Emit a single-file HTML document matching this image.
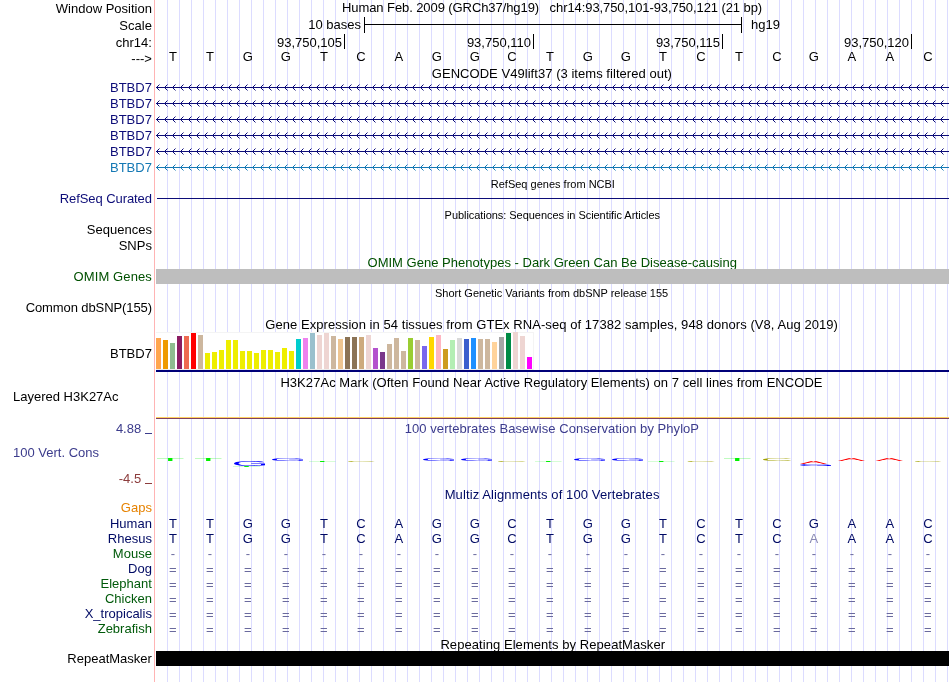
<!DOCTYPE html>
<html><head><meta charset="utf-8"><title>UCSC Genome Browser</title>
<style>
html,body{margin:0;padding:0;background:#fff;}
body{width:950px;height:682px;position:relative;overflow:hidden;font-family:"Liberation Sans",sans-serif;font-size:13px;color:#000;}
.t{position:absolute;white-space:pre;line-height:13px;height:13px;}
.l{text-align:right;left:0;width:151.9px;}
.c{text-align:center;left:156px;width:793px;}
.s{font-size:11px;line-height:11px;height:11px;}
.b{position:absolute;width:40px;text-align:center;line-height:13px;height:13px;}
.r{position:absolute;}
.nv{color:#000a64}.gr{color:#005a0a}
svg{position:absolute;left:0;top:0;}
#w{position:absolute;left:0;top:0;width:950px;height:682px;will-change:transform;}
</style></head><body><div id="w">

<div class="r" style="left:156px;top:0;width:794px;height:682px;background:repeating-linear-gradient(to right,transparent 0,transparent 11px,#dcdcff 11px,#dcdcff 12px);"></div>
<div class="r" style="left:154px;top:0;width:1px;height:682px;background:#ffb4b4;"></div>
<div class="t l " style="top:1.80px;">Window Position</div>
<div class="t l " style="top:18.50px;">Scale</div>
<div class="t l " style="top:35.65px;">chr14:</div>
<div class="t l " style="top:52.15px;">---&gt;</div>
<div class="t" style="left:342.0px;top:0.85px;font-size:13px;line-height:13px;height:13px;letter-spacing:-0.0833px;">Human Feb. 2009 (GRCh37/hg19)   chr14:93,750,101-93,750,121 (21 bp)</div>
<div class="t" style="left:308.3px;top:18.15px;">10 bases</div>
<div class="r" style="left:364px;top:17px;width:1px;height:16px;background:#000;"></div>
<div class="r" style="left:364px;top:24px;width:378px;height:1px;background:#000;"></div>
<div class="r" style="left:741px;top:17px;width:1px;height:16px;background:#000;"></div>
<div class="t" style="left:751px;top:18.15px;">hg19</div>
<div class="r" style="left:344px;top:34px;width:1px;height:15px;background:#000;"></div>
<div class="t" style="left:262px;width:80px;text-align:right;top:35.65px;">93,750,105</div>
<div class="r" style="left:533px;top:34px;width:1px;height:15px;background:#000;"></div>
<div class="t" style="left:451px;width:80px;text-align:right;top:35.65px;">93,750,110</div>
<div class="r" style="left:722px;top:34px;width:1px;height:15px;background:#000;"></div>
<div class="t" style="left:640px;width:80px;text-align:right;top:35.65px;">93,750,115</div>
<div class="r" style="left:911px;top:34px;width:1px;height:15px;background:#000;"></div>
<div class="t" style="left:829px;width:80px;text-align:right;top:35.65px;">93,750,120</div>
<div class="b" style="left:152.90px;top:49.65px;">T</div>
<div class="b" style="left:189.90px;top:49.65px;">T</div>
<div class="b" style="left:227.90px;top:49.65px;">G</div>
<div class="b" style="left:265.90px;top:49.65px;">G</div>
<div class="b" style="left:303.90px;top:49.65px;">T</div>
<div class="b" style="left:340.90px;top:49.65px;">C</div>
<div class="b" style="left:378.90px;top:49.65px;">A</div>
<div class="b" style="left:416.90px;top:49.65px;">G</div>
<div class="b" style="left:454.90px;top:49.65px;">G</div>
<div class="b" style="left:491.90px;top:49.65px;">C</div>
<div class="b" style="left:529.90px;top:49.65px;">T</div>
<div class="b" style="left:567.90px;top:49.65px;">G</div>
<div class="b" style="left:605.90px;top:49.65px;">G</div>
<div class="b" style="left:642.90px;top:49.65px;">T</div>
<div class="b" style="left:680.90px;top:49.65px;">C</div>
<div class="b" style="left:718.90px;top:49.65px;">T</div>
<div class="b" style="left:756.90px;top:49.65px;">C</div>
<div class="b" style="left:793.90px;top:49.65px;">G</div>
<div class="b" style="left:831.90px;top:49.65px;">A</div>
<div class="b" style="left:869.90px;top:49.65px;">A</div>
<div class="b" style="left:907.90px;top:49.65px;">C</div>
<div class="t" style="left:431.8px;top:66.65px;font-size:13px;line-height:13px;height:13px;letter-spacing:0.0436px;">GENCODE V49lift37 (3 items filtered out)</div>
<div class="t l " style="top:80.95px;color:#0c0c78;">BTBD7</div>
<div class="t l " style="top:96.95px;color:#0c0c78;">BTBD7</div>
<div class="t l " style="top:112.95px;color:#0c0c78;">BTBD7</div>
<div class="t l " style="top:128.95px;color:#0c0c78;">BTBD7</div>
<div class="t l " style="top:144.95px;color:#0c0c78;">BTBD7</div>
<div class="t l " style="top:160.95px;color:#1478b4;">BTBD7</div>
<svg width="950" height="682" viewBox="0 0 950 682">
<defs><pattern id="cha" x="156" y="0" width="8" height="7" patternUnits="userSpaceOnUse"><path d="M3.5,0.5 L0.5,3.5 L3.5,6.5" fill="none" stroke="#0c0c78" stroke-width="1"/></pattern><pattern id="chb" x="156" y="0" width="8" height="7" patternUnits="userSpaceOnUse"><path d="M3.5,0.5 L0.5,3.5 L3.5,6.5" fill="none" stroke="#1478b4" stroke-width="1"/></pattern></defs>
<g style="color:#0c0c78" transform="translate(0,84)"><rect x="156" y="0" width="793" height="7" fill="url(#cha)"/><rect x="156" y="3" width="793" height="1" fill="#0c0c78"/></g>
<g style="color:#0c0c78" transform="translate(0,100)"><rect x="156" y="0" width="793" height="7" fill="url(#cha)"/><rect x="156" y="3" width="793" height="1" fill="#0c0c78"/></g>
<g style="color:#0c0c78" transform="translate(0,116)"><rect x="156" y="0" width="793" height="7" fill="url(#cha)"/><rect x="156" y="3" width="793" height="1" fill="#0c0c78"/></g>
<g style="color:#0c0c78" transform="translate(0,132)"><rect x="156" y="0" width="793" height="7" fill="url(#cha)"/><rect x="156" y="3" width="793" height="1" fill="#0c0c78"/></g>
<g style="color:#0c0c78" transform="translate(0,148)"><rect x="156" y="0" width="793" height="7" fill="url(#cha)"/><rect x="156" y="3" width="793" height="1" fill="#0c0c78"/></g>
<g style="color:#1478b4" transform="translate(0,164)"><rect x="156" y="0" width="793" height="7" fill="url(#chb)"/><rect x="156" y="3" width="793" height="1" fill="#1478b4"/></g>
</svg>
<div class="t" style="left:490.8px;top:178.73px;font-size:11px;line-height:11px;height:11px;letter-spacing:-0.0px;">RefSeq genes from NCBI</div>
<div class="t l " style="top:191.65px;color:#0c0c78;letter-spacing:-0.08px;">RefSeq Curated</div>
<div class="r" style="left:157px;top:198px;width:792px;height:1px;background:#0c0c78;"></div>
<div class="t" style="left:444.6px;top:210.23px;font-size:11px;line-height:11px;height:11px;letter-spacing:-0.0489px;">Publications: Sequences in Scientific Articles</div>
<div class="t l " style="top:222.95px;">Sequences</div>
<div class="t l " style="top:239.25px;">SNPs</div>
<div class="t" style="left:367.5px;top:255.85px;font-size:13px;line-height:13px;height:13px;letter-spacing:0.0182px;color:#005000;">OMIM Gene Phenotypes - Dark Green Can Be Disease-causing</div>
<div class="t l " style="top:269.95px;color:#005000;letter-spacing:0.1px;">OMIM Genes</div>
<div class="r" style="left:156px;top:269px;width:793px;height:15px;background:#bebebe;"></div>
<div class="t" style="left:435.0px;top:287.53px;font-size:11px;line-height:11px;height:11px;letter-spacing:0.0px;">Short Genetic Variants from dbSNP release 155</div>
<div class="t l " style="top:300.65px;letter-spacing:-0.1px;">Common dbSNP(155)</div>
<div class="t" style="left:265.3px;top:317.85px;font-size:13px;line-height:13px;height:13px;letter-spacing:0.06px;">Gene Expression in 54 tissues from GTEx RNA-seq of 17382 samples, 948 donors (V8, Aug 2019)</div>
<div class="t l " style="top:347.05px;">BTBD7</div>
<div class="r" style="left:156px;top:332px;width:378px;height:38px;background:#fff;box-shadow:inset -1px 1px 0 #f4f4f4,inset 0 -1px 0 #ededed;"></div>
<div class="r" style="left:156px;top:338px;width:5px;height:31px;background:#FFA54F;"></div>
<div class="r" style="left:163px;top:340px;width:5px;height:29px;background:#EE9A00;"></div>
<div class="r" style="left:170px;top:343px;width:5px;height:26px;background:#8FBC8F;"></div>
<div class="r" style="left:177px;top:336px;width:5px;height:33px;background:#8B1C62;"></div>
<div class="r" style="left:184px;top:336px;width:5px;height:33px;background:#EE6A50;"></div>
<div class="r" style="left:191px;top:333px;width:5px;height:36px;background:#FF0000;"></div>
<div class="r" style="left:198px;top:335px;width:5px;height:34px;background:#CDB79E;"></div>
<div class="r" style="left:205px;top:353px;width:5px;height:16px;background:#EEEE00;"></div>
<div class="r" style="left:212px;top:352px;width:5px;height:17px;background:#EEEE00;"></div>
<div class="r" style="left:219px;top:350px;width:5px;height:19px;background:#EEEE00;"></div>
<div class="r" style="left:226px;top:340px;width:5px;height:29px;background:#EEEE00;"></div>
<div class="r" style="left:233px;top:340px;width:5px;height:29px;background:#EEEE00;"></div>
<div class="r" style="left:240px;top:351px;width:5px;height:18px;background:#EEEE00;"></div>
<div class="r" style="left:247px;top:351px;width:5px;height:18px;background:#EEEE00;"></div>
<div class="r" style="left:254px;top:353px;width:5px;height:16px;background:#EEEE00;"></div>
<div class="r" style="left:261px;top:350px;width:5px;height:19px;background:#EEEE00;"></div>
<div class="r" style="left:268px;top:350px;width:5px;height:19px;background:#EEEE00;"></div>
<div class="r" style="left:275px;top:352px;width:5px;height:17px;background:#EEEE00;"></div>
<div class="r" style="left:282px;top:348px;width:5px;height:21px;background:#EEEE00;"></div>
<div class="r" style="left:289px;top:351px;width:5px;height:18px;background:#EEEE00;"></div>
<div class="r" style="left:296px;top:339px;width:5px;height:30px;background:#00CDCD;"></div>
<div class="r" style="left:303px;top:338px;width:5px;height:31px;background:#EE82EE;"></div>
<div class="r" style="left:310px;top:333px;width:5px;height:36px;background:#9AC0CD;"></div>
<div class="r" style="left:317px;top:335px;width:5px;height:34px;background:#EED5D2;"></div>
<div class="r" style="left:324px;top:333px;width:5px;height:36px;background:#EED5D2;"></div>
<div class="r" style="left:331px;top:336px;width:5px;height:33px;background:#CDB79E;"></div>
<div class="r" style="left:338px;top:339px;width:5px;height:30px;background:#EEC591;"></div>
<div class="r" style="left:345px;top:337px;width:5px;height:32px;background:#8B7355;"></div>
<div class="r" style="left:352px;top:337px;width:5px;height:32px;background:#8B7355;"></div>
<div class="r" style="left:359px;top:337px;width:5px;height:32px;background:#CDAA7D;"></div>
<div class="r" style="left:366px;top:335px;width:5px;height:34px;background:#EED5D2;"></div>
<div class="r" style="left:373px;top:348px;width:5px;height:21px;background:#B452CD;"></div>
<div class="r" style="left:380px;top:352px;width:5px;height:17px;background:#7A378B;"></div>
<div class="r" style="left:387px;top:344px;width:5px;height:25px;background:#CDB79E;"></div>
<div class="r" style="left:394px;top:338px;width:5px;height:31px;background:#CDB79E;"></div>
<div class="r" style="left:401px;top:351px;width:5px;height:18px;background:#CDB79E;"></div>
<div class="r" style="left:408px;top:338px;width:5px;height:31px;background:#9ACD32;"></div>
<div class="r" style="left:415px;top:340px;width:5px;height:29px;background:#CDB79E;"></div>
<div class="r" style="left:422px;top:346px;width:5px;height:23px;background:#7A67EE;"></div>
<div class="r" style="left:429px;top:337px;width:5px;height:32px;background:#FFD700;"></div>
<div class="r" style="left:436px;top:335px;width:5px;height:34px;background:#FFB6C1;"></div>
<div class="r" style="left:443px;top:349px;width:5px;height:20px;background:#CD9B1D;"></div>
<div class="r" style="left:450px;top:340px;width:5px;height:29px;background:#B4EEB4;"></div>
<div class="r" style="left:457px;top:338px;width:5px;height:31px;background:#D9D9D9;"></div>
<div class="r" style="left:464px;top:339px;width:5px;height:30px;background:#3A5FCD;"></div>
<div class="r" style="left:471px;top:338px;width:5px;height:31px;background:#1E90FF;"></div>
<div class="r" style="left:478px;top:339px;width:5px;height:30px;background:#CDB79E;"></div>
<div class="r" style="left:485px;top:339px;width:5px;height:30px;background:#CDB79E;"></div>
<div class="r" style="left:492px;top:342px;width:5px;height:27px;background:#FFD39B;"></div>
<div class="r" style="left:499px;top:337px;width:5px;height:32px;background:#A6A6A6;"></div>
<div class="r" style="left:506px;top:333px;width:5px;height:36px;background:#008B45;"></div>
<div class="r" style="left:513px;top:332px;width:5px;height:37px;background:#EED5D2;"></div>
<div class="r" style="left:520px;top:336px;width:5px;height:33px;background:#EED5D2;"></div>
<div class="r" style="left:527px;top:357px;width:5px;height:12px;background:#FF00FF;"></div>
<div class="r" style="left:156px;top:370px;width:793px;height:2px;background:#000078;"></div>
<div class="t" style="left:280.4px;top:376.05px;font-size:13px;line-height:13px;height:13px;letter-spacing:0.0541px;">H3K27Ac Mark (Often Found Near Active Regulatory Elements) on 7 cell lines from ENCODE</div>
<div class="t" style="left:13px;top:390.15px;">Layered H3K27Ac</div>
<div class="r" style="left:156px;top:417px;width:793px;height:1px;background:#ffd060;"></div>
<div class="r" style="left:156px;top:418px;width:793px;height:1px;background:#804060;"></div>
<div class="t" style="left:404.8px;top:421.65px;font-size:13px;line-height:13px;height:13px;letter-spacing:0.05px;color:#3c3c8c;">100 vertebrates Basewise Conservation by PhyloP</div>
<div class="t l " style="top:421.65px;color:#3c3c8c;width:141.2px;">4.88</div>
<div class="r" style="left:145px;top:433px;width:7px;height:1px;background:#3c3c8c;"></div>
<div class="t" style="left:13px;top:445.95px;color:#3c3c8c;">100 Vert. Cons</div>
<div class="t l " style="top:471.65px;color:#8c3c3c;width:141.2px;">-4.5</div>
<div class="r" style="left:145px;top:483px;width:7px;height:1px;background:#8c3c3c;"></div>
<svg width="950" height="682" viewBox="0 0 950 682">
<path d="M720 1253V0H530V1253H46V1409H1204V1253Z" fill="#00f000" transform="matrix(0.02288,0,0,-0.002129,155.947,461.000)"/>
<path d="M720 1253V0H530V1253H46V1409H1204V1253Z" fill="#00f000" transform="matrix(0.02288,0,0,-0.002129,193.947,461.000)"/>
<path d="M103 711Q103 1054 287.0 1242.0Q471 1430 804 1430Q1038 1430 1184.0 1351.0Q1330 1272 1409 1098L1227 1044Q1167 1164 1061.5 1219.0Q956 1274 799 1274Q555 1274 426.0 1126.5Q297 979 297 711Q297 444 434.0 289.5Q571 135 813 135Q951 135 1070.5 177.0Q1190 219 1264 291V545H843V705H1440V219Q1328 105 1165.5 42.5Q1003 -20 813 -20Q592 -20 432.0 68.0Q272 156 187.5 321.5Q103 487 103 711Z" fill="#0000ff" transform="matrix(0.02319,0,0,-0.003448,231.612,465.931)"/>
<path d="M720 1253V0H530V1253H46V1409H1204V1253Z" fill="#00f000" transform="matrix(0.02332,0,0,-0.000639,231.927,466.900)"/>
<path d="M103 711Q103 1054 287.0 1242.0Q471 1430 804 1430Q1038 1430 1184.0 1351.0Q1330 1272 1409 1098L1227 1044Q1167 1164 1061.5 1219.0Q956 1274 799 1274Q555 1274 426.0 1126.5Q297 979 297 711Q297 444 434.0 289.5Q571 135 813 135Q951 135 1070.5 177.0Q1190 219 1264 291V545H843V705H1440V219Q1328 105 1165.5 42.5Q1003 -20 813 -20Q592 -20 432.0 68.0Q272 156 187.5 321.5Q103 487 103 711Z" fill="#0000ff" transform="matrix(0.02319,0,0,-0.002069,269.612,460.959)"/>
<path d="M720 1253V0H530V1253H46V1409H1204V1253Z" fill="#00f000" transform="matrix(0.02288,0,0,-0.000639,307.947,461.900)"/>
<path d="M792 1274Q558 1274 428.0 1123.5Q298 973 298 711Q298 452 433.5 294.5Q569 137 800 137Q1096 137 1245 430L1401 352Q1314 170 1156.5 75.0Q999 -20 791 -20Q578 -20 422.5 68.5Q267 157 185.5 321.5Q104 486 104 711Q104 1048 286.0 1239.0Q468 1430 790 1430Q1015 1430 1166.0 1342.0Q1317 1254 1388 1081L1207 1021Q1158 1144 1049.5 1209.0Q941 1274 792 1274Z" fill="#a0a000" transform="matrix(0.02082,0,0,-0.000621,345.835,461.888)"/>
<path d="M103 711Q103 1054 287.0 1242.0Q471 1430 804 1430Q1038 1430 1184.0 1351.0Q1330 1272 1409 1098L1227 1044Q1167 1164 1061.5 1219.0Q956 1274 799 1274Q555 1274 426.0 1126.5Q297 979 297 711Q297 444 434.0 289.5Q571 135 813 135Q951 135 1070.5 177.0Q1190 219 1264 291V545H843V705H1440V219Q1328 105 1165.5 42.5Q1003 -20 813 -20Q592 -20 432.0 68.0Q272 156 187.5 321.5Q103 487 103 711Z" fill="#0000ff" transform="matrix(0.02319,0,0,-0.002069,420.612,460.959)"/>
<path d="M103 711Q103 1054 287.0 1242.0Q471 1430 804 1430Q1038 1430 1184.0 1351.0Q1330 1272 1409 1098L1227 1044Q1167 1164 1061.5 1219.0Q956 1274 799 1274Q555 1274 426.0 1126.5Q297 979 297 711Q297 444 434.0 289.5Q571 135 813 135Q951 135 1070.5 177.0Q1190 219 1264 291V545H843V705H1440V219Q1328 105 1165.5 42.5Q1003 -20 813 -20Q592 -20 432.0 68.0Q272 156 187.5 321.5Q103 487 103 711Z" fill="#0000ff" transform="matrix(0.02319,0,0,-0.002069,458.612,460.959)"/>
<path d="M792 1274Q558 1274 428.0 1123.5Q298 973 298 711Q298 452 433.5 294.5Q569 137 800 137Q1096 137 1245 430L1401 352Q1314 170 1156.5 75.0Q999 -20 791 -20Q578 -20 422.5 68.5Q267 157 185.5 321.5Q104 486 104 711Q104 1048 286.0 1239.0Q468 1430 790 1430Q1015 1430 1166.0 1342.0Q1317 1254 1388 1081L1207 1021Q1158 1144 1049.5 1209.0Q941 1274 792 1274Z" fill="#a0a000" transform="matrix(0.02159,0,0,-0.000621,495.755,461.888)"/>
<path d="M720 1253V0H530V1253H46V1409H1204V1253Z" fill="#00f000" transform="matrix(0.02288,0,0,-0.000639,533.947,461.900)"/>
<path d="M103 711Q103 1054 287.0 1242.0Q471 1430 804 1430Q1038 1430 1184.0 1351.0Q1330 1272 1409 1098L1227 1044Q1167 1164 1061.5 1219.0Q956 1274 799 1274Q555 1274 426.0 1126.5Q297 979 297 711Q297 444 434.0 289.5Q571 135 813 135Q951 135 1070.5 177.0Q1190 219 1264 291V545H843V705H1440V219Q1328 105 1165.5 42.5Q1003 -20 813 -20Q592 -20 432.0 68.0Q272 156 187.5 321.5Q103 487 103 711Z" fill="#0000ff" transform="matrix(0.02319,0,0,-0.002069,571.612,460.959)"/>
<path d="M103 711Q103 1054 287.0 1242.0Q471 1430 804 1430Q1038 1430 1184.0 1351.0Q1330 1272 1409 1098L1227 1044Q1167 1164 1061.5 1219.0Q956 1274 799 1274Q555 1274 426.0 1126.5Q297 979 297 711Q297 444 434.0 289.5Q571 135 813 135Q951 135 1070.5 177.0Q1190 219 1264 291V545H843V705H1440V219Q1328 105 1165.5 42.5Q1003 -20 813 -20Q592 -20 432.0 68.0Q272 156 187.5 321.5Q103 487 103 711Z" fill="#0000ff" transform="matrix(0.02319,0,0,-0.002069,609.612,460.959)"/>
<path d="M720 1253V0H530V1253H46V1409H1204V1253Z" fill="#00f000" transform="matrix(0.02288,0,0,-0.000639,646.947,461.900)"/>
<path d="M792 1274Q558 1274 428.0 1123.5Q298 973 298 711Q298 452 433.5 294.5Q569 137 800 137Q1096 137 1245 430L1401 352Q1314 170 1156.5 75.0Q999 -20 791 -20Q578 -20 422.5 68.5Q267 157 185.5 321.5Q104 486 104 711Q104 1048 286.0 1239.0Q468 1430 790 1430Q1015 1430 1166.0 1342.0Q1317 1254 1388 1081L1207 1021Q1158 1144 1049.5 1209.0Q941 1274 792 1274Z" fill="#a0a000" transform="matrix(0.02120,0,0,-0.000621,685.295,461.888)"/>
<path d="M720 1253V0H530V1253H46V1409H1204V1253Z" fill="#00f000" transform="matrix(0.02288,0,0,-0.002129,722.947,461.000)"/>
<path d="M792 1274Q558 1274 428.0 1123.5Q298 973 298 711Q298 452 433.5 294.5Q569 137 800 137Q1096 137 1245 430L1401 352Q1314 170 1156.5 75.0Q999 -20 791 -20Q578 -20 422.5 68.5Q267 157 185.5 321.5Q104 486 104 711Q104 1048 286.0 1239.0Q468 1430 790 1430Q1015 1430 1166.0 1342.0Q1317 1254 1388 1081L1207 1021Q1158 1144 1049.5 1209.0Q941 1274 792 1274Z" fill="#a0a000" transform="matrix(0.02197,0,0,-0.002069,760.715,460.959)"/>
<path d="M1167 0 1006 412H364L202 0H4L579 1409H796L1362 0ZM685 1265 676 1237Q651 1154 602 1024L422 561H949L768 1026Q740 1095 712 1182Z" fill="#ff0000" transform="matrix(0.01988,0,0,-0.002129,799.920,464.000)"/>
<path d="M103 711Q103 1054 287.0 1242.0Q471 1430 804 1430Q1038 1430 1184.0 1351.0Q1330 1272 1409 1098L1227 1044Q1167 1164 1061.5 1219.0Q956 1274 799 1274Q555 1274 426.0 1126.5Q297 979 297 711Q297 444 434.0 289.5Q571 135 813 135Q951 135 1070.5 177.0Q1190 219 1264 291V545H843V705H1440V219Q1328 105 1165.5 42.5Q1003 -20 813 -20Q592 -20 432.0 68.0Q272 156 187.5 321.5Q103 487 103 711Z" fill="#0000ff" transform="matrix(0.02319,0,0,-0.001379,797.612,465.972)"/>
<path d="M1167 0 1006 412H364L202 0H4L579 1409H796L1362 0ZM685 1265 676 1237Q651 1154 602 1024L422 561H949L768 1026Q740 1095 712 1182Z" fill="#ff0000" transform="matrix(0.01988,0,0,-0.002129,837.920,461.000)"/>
<path d="M1167 0 1006 412H364L202 0H4L579 1409H796L1362 0ZM685 1265 676 1237Q651 1154 602 1024L422 561H949L768 1026Q740 1095 712 1182Z" fill="#ff0000" transform="matrix(0.02025,0,0,-0.002129,875.419,461.000)"/>
<path d="M792 1274Q558 1274 428.0 1123.5Q298 973 298 711Q298 452 433.5 294.5Q569 137 800 137Q1096 137 1245 430L1401 352Q1314 170 1156.5 75.0Q999 -20 791 -20Q578 -20 422.5 68.5Q267 157 185.5 321.5Q104 486 104 711Q104 1048 286.0 1239.0Q468 1430 790 1430Q1015 1430 1166.0 1342.0Q1317 1254 1388 1081L1207 1021Q1158 1144 1049.5 1209.0Q941 1274 792 1274Z" fill="#a0a000" transform="matrix(0.02043,0,0,-0.000621,912.875,461.888)"/>
<rect x="309" y="461" width="26.5" height="1" fill="#00f000" fill-opacity="0.16"/>
<rect x="535" y="461" width="26.5" height="1" fill="#00f000" fill-opacity="0.16"/>
<rect x="648" y="461" width="26.5" height="1" fill="#00f000" fill-opacity="0.16"/>
<rect x="233" y="466" width="27" height="1" fill="#00f000" fill-opacity="0.16"/>
</svg>
<div class="t" style="left:444.7px;top:487.85px;font-size:13px;line-height:13px;height:13px;letter-spacing:0.1057px;color:#000a64;">Multiz Alignments of 100 Vertebrates</div>
<div class="t l " style="top:501.35px;color:#e68200;">Gaps</div>
<div class="t l nv" style="top:516.55px;">Human</div>
<div class="b" style="left:152.90px;top:516.55px;color:#000a64;">T</div>
<div class="b" style="left:189.90px;top:516.55px;color:#000a64;">T</div>
<div class="b" style="left:227.90px;top:516.55px;color:#000a64;">G</div>
<div class="b" style="left:265.90px;top:516.55px;color:#000a64;">G</div>
<div class="b" style="left:303.90px;top:516.55px;color:#000a64;">T</div>
<div class="b" style="left:340.90px;top:516.55px;color:#000a64;">C</div>
<div class="b" style="left:378.90px;top:516.55px;color:#000a64;">A</div>
<div class="b" style="left:416.90px;top:516.55px;color:#000a64;">G</div>
<div class="b" style="left:454.90px;top:516.55px;color:#000a64;">G</div>
<div class="b" style="left:491.90px;top:516.55px;color:#000a64;">C</div>
<div class="b" style="left:529.90px;top:516.55px;color:#000a64;">T</div>
<div class="b" style="left:567.90px;top:516.55px;color:#000a64;">G</div>
<div class="b" style="left:605.90px;top:516.55px;color:#000a64;">G</div>
<div class="b" style="left:642.90px;top:516.55px;color:#000a64;">T</div>
<div class="b" style="left:680.90px;top:516.55px;color:#000a64;">C</div>
<div class="b" style="left:718.90px;top:516.55px;color:#000a64;">T</div>
<div class="b" style="left:756.90px;top:516.55px;color:#000a64;">C</div>
<div class="b" style="left:793.90px;top:516.55px;color:#000a64;">G</div>
<div class="b" style="left:831.90px;top:516.55px;color:#000a64;">A</div>
<div class="b" style="left:869.90px;top:516.55px;color:#000a64;">A</div>
<div class="b" style="left:907.90px;top:516.55px;color:#000a64;">C</div>
<div class="t l nv" style="top:531.62px;">Rhesus</div>
<div class="b" style="left:152.90px;top:531.62px;color:#000a64;">T</div>
<div class="b" style="left:189.90px;top:531.62px;color:#000a64;">T</div>
<div class="b" style="left:227.90px;top:531.62px;color:#000a64;">G</div>
<div class="b" style="left:265.90px;top:531.62px;color:#000a64;">G</div>
<div class="b" style="left:303.90px;top:531.62px;color:#000a64;">T</div>
<div class="b" style="left:340.90px;top:531.62px;color:#000a64;">C</div>
<div class="b" style="left:378.90px;top:531.62px;color:#000a64;">A</div>
<div class="b" style="left:416.90px;top:531.62px;color:#000a64;">G</div>
<div class="b" style="left:454.90px;top:531.62px;color:#000a64;">G</div>
<div class="b" style="left:491.90px;top:531.62px;color:#000a64;">C</div>
<div class="b" style="left:529.90px;top:531.62px;color:#000a64;">T</div>
<div class="b" style="left:567.90px;top:531.62px;color:#000a64;">G</div>
<div class="b" style="left:605.90px;top:531.62px;color:#000a64;">G</div>
<div class="b" style="left:642.90px;top:531.62px;color:#000a64;">T</div>
<div class="b" style="left:680.90px;top:531.62px;color:#000a64;">C</div>
<div class="b" style="left:718.90px;top:531.62px;color:#000a64;">T</div>
<div class="b" style="left:756.90px;top:531.62px;color:#000a64;">C</div>
<div class="b" style="left:793.90px;top:531.62px;color:#8a8ab4;">A</div>
<div class="b" style="left:831.90px;top:531.62px;color:#000a64;">A</div>
<div class="b" style="left:869.90px;top:531.62px;color:#000a64;">A</div>
<div class="b" style="left:907.90px;top:531.62px;color:#000a64;">C</div>
<div class="t l gr" style="top:546.69px;">Mouse</div>
<div class="b" style="left:152.90px;top:546.69px;color:#6a6a9e;">-</div>
<div class="b" style="left:189.90px;top:546.69px;color:#6a6a9e;">-</div>
<div class="b" style="left:227.90px;top:546.69px;color:#6a6a9e;">-</div>
<div class="b" style="left:265.90px;top:546.69px;color:#6a6a9e;">-</div>
<div class="b" style="left:303.90px;top:546.69px;color:#6a6a9e;">-</div>
<div class="b" style="left:340.90px;top:546.69px;color:#6a6a9e;">-</div>
<div class="b" style="left:378.90px;top:546.69px;color:#6a6a9e;">-</div>
<div class="b" style="left:416.90px;top:546.69px;color:#6a6a9e;">-</div>
<div class="b" style="left:454.90px;top:546.69px;color:#6a6a9e;">-</div>
<div class="b" style="left:491.90px;top:546.69px;color:#6a6a9e;">-</div>
<div class="b" style="left:529.90px;top:546.69px;color:#6a6a9e;">-</div>
<div class="b" style="left:567.90px;top:546.69px;color:#6a6a9e;">-</div>
<div class="b" style="left:605.90px;top:546.69px;color:#6a6a9e;">-</div>
<div class="b" style="left:642.90px;top:546.69px;color:#6a6a9e;">-</div>
<div class="b" style="left:680.90px;top:546.69px;color:#6a6a9e;">-</div>
<div class="b" style="left:718.90px;top:546.69px;color:#6a6a9e;">-</div>
<div class="b" style="left:756.90px;top:546.69px;color:#6a6a9e;">-</div>
<div class="b" style="left:793.90px;top:546.69px;color:#6a6a9e;">-</div>
<div class="b" style="left:831.90px;top:546.69px;color:#6a6a9e;">-</div>
<div class="b" style="left:869.90px;top:546.69px;color:#6a6a9e;">-</div>
<div class="b" style="left:907.90px;top:546.69px;color:#6a6a9e;">-</div>
<div class="t l nv" style="top:561.76px;">Dog</div>
<div class="b" style="left:152.90px;top:562.76px;color:#6a6a9e;">=</div>
<div class="b" style="left:189.90px;top:562.76px;color:#6a6a9e;">=</div>
<div class="b" style="left:227.90px;top:562.76px;color:#6a6a9e;">=</div>
<div class="b" style="left:265.90px;top:562.76px;color:#6a6a9e;">=</div>
<div class="b" style="left:303.90px;top:562.76px;color:#6a6a9e;">=</div>
<div class="b" style="left:340.90px;top:562.76px;color:#6a6a9e;">=</div>
<div class="b" style="left:378.90px;top:562.76px;color:#6a6a9e;">=</div>
<div class="b" style="left:416.90px;top:562.76px;color:#6a6a9e;">=</div>
<div class="b" style="left:454.90px;top:562.76px;color:#6a6a9e;">=</div>
<div class="b" style="left:491.90px;top:562.76px;color:#6a6a9e;">=</div>
<div class="b" style="left:529.90px;top:562.76px;color:#6a6a9e;">=</div>
<div class="b" style="left:567.90px;top:562.76px;color:#6a6a9e;">=</div>
<div class="b" style="left:605.90px;top:562.76px;color:#6a6a9e;">=</div>
<div class="b" style="left:642.90px;top:562.76px;color:#6a6a9e;">=</div>
<div class="b" style="left:680.90px;top:562.76px;color:#6a6a9e;">=</div>
<div class="b" style="left:718.90px;top:562.76px;color:#6a6a9e;">=</div>
<div class="b" style="left:756.90px;top:562.76px;color:#6a6a9e;">=</div>
<div class="b" style="left:793.90px;top:562.76px;color:#6a6a9e;">=</div>
<div class="b" style="left:831.90px;top:562.76px;color:#6a6a9e;">=</div>
<div class="b" style="left:869.90px;top:562.76px;color:#6a6a9e;">=</div>
<div class="b" style="left:907.90px;top:562.76px;color:#6a6a9e;">=</div>
<div class="t l gr" style="top:576.83px;">Elephant</div>
<div class="b" style="left:152.90px;top:577.83px;color:#6a6a9e;">=</div>
<div class="b" style="left:189.90px;top:577.83px;color:#6a6a9e;">=</div>
<div class="b" style="left:227.90px;top:577.83px;color:#6a6a9e;">=</div>
<div class="b" style="left:265.90px;top:577.83px;color:#6a6a9e;">=</div>
<div class="b" style="left:303.90px;top:577.83px;color:#6a6a9e;">=</div>
<div class="b" style="left:340.90px;top:577.83px;color:#6a6a9e;">=</div>
<div class="b" style="left:378.90px;top:577.83px;color:#6a6a9e;">=</div>
<div class="b" style="left:416.90px;top:577.83px;color:#6a6a9e;">=</div>
<div class="b" style="left:454.90px;top:577.83px;color:#6a6a9e;">=</div>
<div class="b" style="left:491.90px;top:577.83px;color:#6a6a9e;">=</div>
<div class="b" style="left:529.90px;top:577.83px;color:#6a6a9e;">=</div>
<div class="b" style="left:567.90px;top:577.83px;color:#6a6a9e;">=</div>
<div class="b" style="left:605.90px;top:577.83px;color:#6a6a9e;">=</div>
<div class="b" style="left:642.90px;top:577.83px;color:#6a6a9e;">=</div>
<div class="b" style="left:680.90px;top:577.83px;color:#6a6a9e;">=</div>
<div class="b" style="left:718.90px;top:577.83px;color:#6a6a9e;">=</div>
<div class="b" style="left:756.90px;top:577.83px;color:#6a6a9e;">=</div>
<div class="b" style="left:793.90px;top:577.83px;color:#6a6a9e;">=</div>
<div class="b" style="left:831.90px;top:577.83px;color:#6a6a9e;">=</div>
<div class="b" style="left:869.90px;top:577.83px;color:#6a6a9e;">=</div>
<div class="b" style="left:907.90px;top:577.83px;color:#6a6a9e;">=</div>
<div class="t l gr" style="top:591.90px;">Chicken</div>
<div class="b" style="left:152.90px;top:592.90px;color:#6a6a9e;">=</div>
<div class="b" style="left:189.90px;top:592.90px;color:#6a6a9e;">=</div>
<div class="b" style="left:227.90px;top:592.90px;color:#6a6a9e;">=</div>
<div class="b" style="left:265.90px;top:592.90px;color:#6a6a9e;">=</div>
<div class="b" style="left:303.90px;top:592.90px;color:#6a6a9e;">=</div>
<div class="b" style="left:340.90px;top:592.90px;color:#6a6a9e;">=</div>
<div class="b" style="left:378.90px;top:592.90px;color:#6a6a9e;">=</div>
<div class="b" style="left:416.90px;top:592.90px;color:#6a6a9e;">=</div>
<div class="b" style="left:454.90px;top:592.90px;color:#6a6a9e;">=</div>
<div class="b" style="left:491.90px;top:592.90px;color:#6a6a9e;">=</div>
<div class="b" style="left:529.90px;top:592.90px;color:#6a6a9e;">=</div>
<div class="b" style="left:567.90px;top:592.90px;color:#6a6a9e;">=</div>
<div class="b" style="left:605.90px;top:592.90px;color:#6a6a9e;">=</div>
<div class="b" style="left:642.90px;top:592.90px;color:#6a6a9e;">=</div>
<div class="b" style="left:680.90px;top:592.90px;color:#6a6a9e;">=</div>
<div class="b" style="left:718.90px;top:592.90px;color:#6a6a9e;">=</div>
<div class="b" style="left:756.90px;top:592.90px;color:#6a6a9e;">=</div>
<div class="b" style="left:793.90px;top:592.90px;color:#6a6a9e;">=</div>
<div class="b" style="left:831.90px;top:592.90px;color:#6a6a9e;">=</div>
<div class="b" style="left:869.90px;top:592.90px;color:#6a6a9e;">=</div>
<div class="b" style="left:907.90px;top:592.90px;color:#6a6a9e;">=</div>
<div class="t l nv" style="top:606.97px;">X_tropicalis</div>
<div class="b" style="left:152.90px;top:607.97px;color:#6a6a9e;">=</div>
<div class="b" style="left:189.90px;top:607.97px;color:#6a6a9e;">=</div>
<div class="b" style="left:227.90px;top:607.97px;color:#6a6a9e;">=</div>
<div class="b" style="left:265.90px;top:607.97px;color:#6a6a9e;">=</div>
<div class="b" style="left:303.90px;top:607.97px;color:#6a6a9e;">=</div>
<div class="b" style="left:340.90px;top:607.97px;color:#6a6a9e;">=</div>
<div class="b" style="left:378.90px;top:607.97px;color:#6a6a9e;">=</div>
<div class="b" style="left:416.90px;top:607.97px;color:#6a6a9e;">=</div>
<div class="b" style="left:454.90px;top:607.97px;color:#6a6a9e;">=</div>
<div class="b" style="left:491.90px;top:607.97px;color:#6a6a9e;">=</div>
<div class="b" style="left:529.90px;top:607.97px;color:#6a6a9e;">=</div>
<div class="b" style="left:567.90px;top:607.97px;color:#6a6a9e;">=</div>
<div class="b" style="left:605.90px;top:607.97px;color:#6a6a9e;">=</div>
<div class="b" style="left:642.90px;top:607.97px;color:#6a6a9e;">=</div>
<div class="b" style="left:680.90px;top:607.97px;color:#6a6a9e;">=</div>
<div class="b" style="left:718.90px;top:607.97px;color:#6a6a9e;">=</div>
<div class="b" style="left:756.90px;top:607.97px;color:#6a6a9e;">=</div>
<div class="b" style="left:793.90px;top:607.97px;color:#6a6a9e;">=</div>
<div class="b" style="left:831.90px;top:607.97px;color:#6a6a9e;">=</div>
<div class="b" style="left:869.90px;top:607.97px;color:#6a6a9e;">=</div>
<div class="b" style="left:907.90px;top:607.97px;color:#6a6a9e;">=</div>
<div class="t l gr" style="top:622.04px;">Zebrafish</div>
<div class="b" style="left:152.90px;top:623.04px;color:#6a6a9e;">=</div>
<div class="b" style="left:189.90px;top:623.04px;color:#6a6a9e;">=</div>
<div class="b" style="left:227.90px;top:623.04px;color:#6a6a9e;">=</div>
<div class="b" style="left:265.90px;top:623.04px;color:#6a6a9e;">=</div>
<div class="b" style="left:303.90px;top:623.04px;color:#6a6a9e;">=</div>
<div class="b" style="left:340.90px;top:623.04px;color:#6a6a9e;">=</div>
<div class="b" style="left:378.90px;top:623.04px;color:#6a6a9e;">=</div>
<div class="b" style="left:416.90px;top:623.04px;color:#6a6a9e;">=</div>
<div class="b" style="left:454.90px;top:623.04px;color:#6a6a9e;">=</div>
<div class="b" style="left:491.90px;top:623.04px;color:#6a6a9e;">=</div>
<div class="b" style="left:529.90px;top:623.04px;color:#6a6a9e;">=</div>
<div class="b" style="left:567.90px;top:623.04px;color:#6a6a9e;">=</div>
<div class="b" style="left:605.90px;top:623.04px;color:#6a6a9e;">=</div>
<div class="b" style="left:642.90px;top:623.04px;color:#6a6a9e;">=</div>
<div class="b" style="left:680.90px;top:623.04px;color:#6a6a9e;">=</div>
<div class="b" style="left:718.90px;top:623.04px;color:#6a6a9e;">=</div>
<div class="b" style="left:756.90px;top:623.04px;color:#6a6a9e;">=</div>
<div class="b" style="left:793.90px;top:623.04px;color:#6a6a9e;">=</div>
<div class="b" style="left:831.90px;top:623.04px;color:#6a6a9e;">=</div>
<div class="b" style="left:869.90px;top:623.04px;color:#6a6a9e;">=</div>
<div class="b" style="left:907.90px;top:623.04px;color:#6a6a9e;">=</div>
<div class="t" style="left:440.4px;top:638.15px;font-size:13px;line-height:13px;height:13px;letter-spacing:0.0636px;">Repeating Elements by RepeatMasker</div>
<div class="t l " style="top:651.95px;">RepeatMasker</div>
<div class="r" style="left:156px;top:651px;width:793px;height:15px;background:#000;"></div>
</div></body></html>
